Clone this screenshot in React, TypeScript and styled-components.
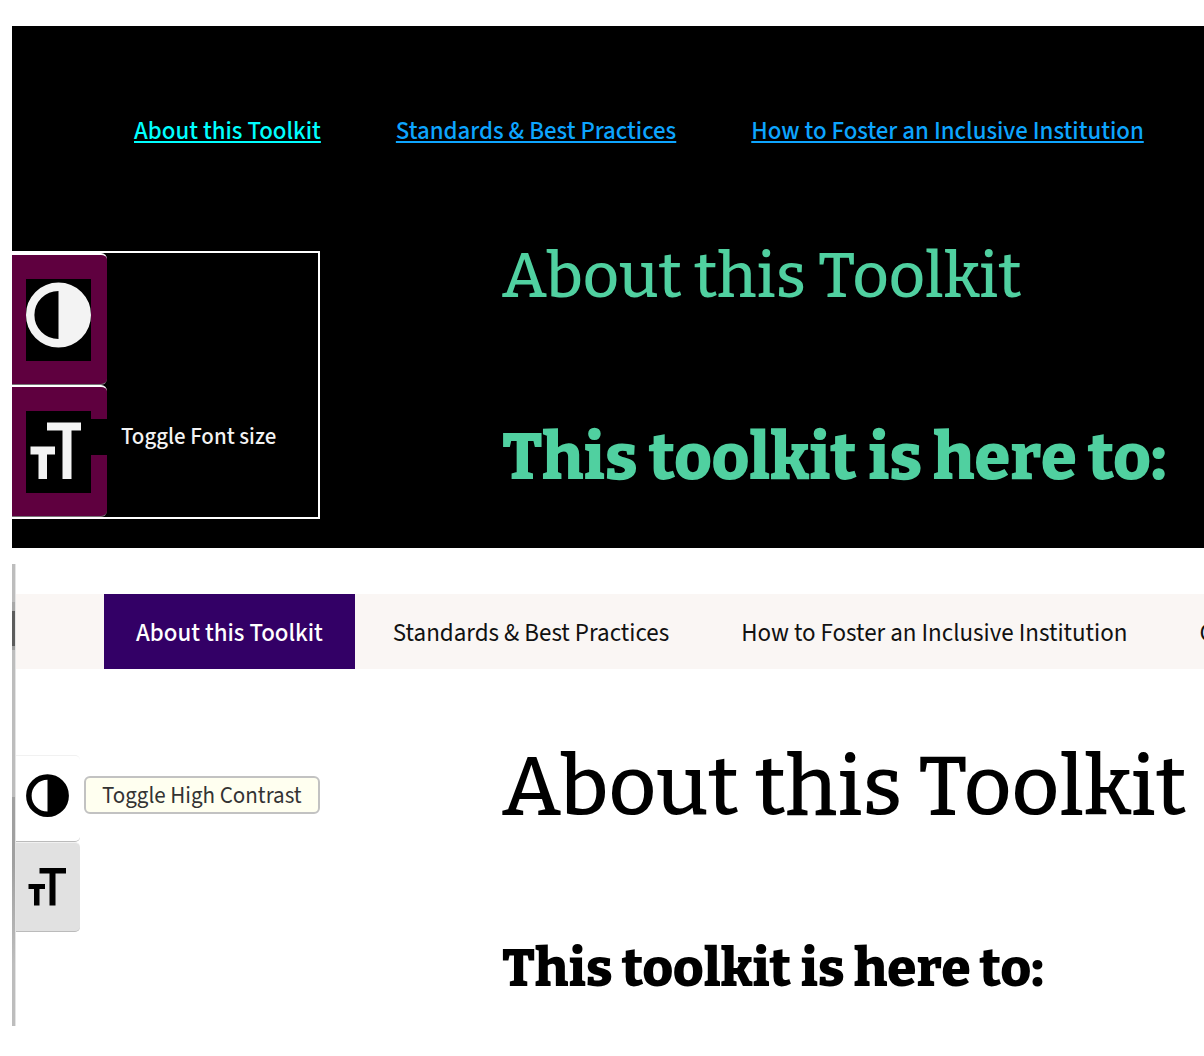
import React from "react";
import styled, { createGlobalStyle, css } from "styled-components";

const sans = `"Source Sans 3", "Source Sans Pro", "Noto Sans CJK SC", "Noto Sans", sans-serif`;
const slab = `Bitter, "DejaVu Serif", serif`;

const GlobalStyle = createGlobalStyle`
  *, *::before, *::after { box-sizing: border-box; }
  body { margin: 0; background: #fff; font-family: ${sans}; overflow-x: hidden; }
  h1, h2 { margin: 0; padding: 0; }
`;

const Page = styled.main`
  display: flex;
  flex-direction: column;
  gap: 16px;
  padding: 26px 0 30px 12px;
`;

const DarkPanel = styled.section`
  background: #000;
  padding: 85px 0 29px;
  overflow: hidden;
`;

const LightPanel = styled.section`
  display: grid;
  grid-template-columns: 4px minmax(0, 1fr);
  background: #fff;
  overflow: hidden;
`;

const WindowEdge = styled.div`
  border-right: 1px solid #e4e4e4;
  background: linear-gradient(
    to bottom,
    #bdbdbd 0 38px,
    #a8a8a8 38px 47px,
    #5c5c5c 47px 82px,
    #9c9c9c 82px 86px,
    #bdbdbd 86px 233px,
    #a0a0a0 233px 300px,
    #bdbdbd 400px
  );
`;

const LightContent = styled.div`
  padding: 30px 0 18px;
  min-width: 0;
`;

const DarkNav = styled.nav`
  display: flex;
  gap: 75px;
  padding-left: 122px;
  white-space: nowrap;
`;

const DarkLink = styled.a<{ $current?: boolean }>`
  color: ${(p) => (p.$current ? "#00ffff" : "#0da5ff")};
  font-size: 25px;
  font-weight: 500;
  line-height: 40px;
  text-decoration: underline;
  text-decoration-thickness: 2px;
  text-underline-offset: 2px;
`;

const LightNav = styled.nav`
  display: flex;
  padding-left: 88px;
  background: #faf6f4;
  white-space: nowrap;
`;

const LightLink = styled.a<{ $current?: boolean }>`
  padding: 3px 36px 0;
  color: #111;
  font-size: 25px;
  line-height: 72px;
  text-decoration: none;
  ${(p) =>
    p.$current &&
    css`
      margin-right: 2px;
      padding: 3px 32px 0;
      background: #330066;
      color: #fff;
      font-weight: 500;
    `}
`;

const DarkBody = styled.div`
  display: grid;
  grid-template-columns: 490px minmax(0, 1fr);
  align-items: start;
  padding-top: 100px;
`;

const LightBody = styled.div`
  display: grid;
  grid-template-columns: 486px minmax(0, 1fr);
  align-items: start;
  padding-top: 70px;
`;

const Article = styled.div<{ $color: string; $gap: number }>`
  display: flex;
  flex-direction: column;
  gap: ${(p) => p.$gap}px;
  color: ${(p) => p.$color};
  font-family: ${slab};
  white-space: nowrap;
`;

const Title = styled.h1<{ $size: number; $line: number }>`
  font-size: ${(p) => p.$size}px;
  font-weight: 500;
  line-height: ${(p) => p.$line}px;
`;

const Subtitle = styled.h2<{ $size: number }>`
  font-size: ${(p) => p.$size}px;
  font-weight: 800;
  line-height: 80px;
`;

const DarkToolbar = styled.div`
  width: 308px;
  border: 2px solid #fff;
  border-left: 0;
`;

const DarkTool = styled.button`
  display: flex;
  position: relative;
  width: 95px;
  height: 132px;
  padding: 0 0 0 14px;
  align-items: center;
  border: 0;
  border-top: 2px solid #fff;
  border-bottom: 1px solid #777;
  border-radius: 0 6px 6px 0;
  background: #5f003f;
  color: #f3f3f3;
`;

const DarkIconBox = styled.span`
  display: block;
  position: relative;
  z-index: 1;
  width: 65px;
  height: 82px;
  background: #000;

  svg { display: block; width: 65px; height: 82px; }
`;

const DarkTip = styled.span`
  position: absolute;
  left: 79px;
  top: 32px;
  padding: 0 30px;
  background: #000;
  color: #f3f3f3;
  font-family: ${sans};
  font-size: 23px;
  font-weight: 500;
  line-height: 36px;
  white-space: nowrap;
`;

const LightToolbar = styled.div`
  width: 64px;
  padding-top: 16px;
`;

const LightTool = styled.button<{ $shaded?: boolean }>`
  display: flex;
  position: relative;
  width: 64px;
  height: ${(p) => (p.$shaded ? 90 : 87)}px;
  padding: 0 0 0 10px;
  align-items: center;
  border: 0;
  border-top: 1px solid #f1f1f1;
  border-bottom: 1px solid #bbb;
  border-radius: 0 5px 5px 0;
  background: ${(p) => (p.$shaded ? "#e1e1e1" : "#fff")};
  color: #000;

  svg { display: block; width: 43px; height: 54px; }
`;

const LightTip = styled.span`
  position: absolute;
  left: 68px;
  top: 20px;
  padding: 1px 16px 0;
  border: 2px solid #c2c2c2;
  border-radius: 6px;
  background: #fffff0;
  color: #333;
  font-family: ${sans};
  font-size: 23px;
  line-height: 33px;
  white-space: nowrap;
`;

const Contrast = () => (
  <svg viewBox="0 0 65 82" aria-hidden="true">
    <circle cx="32.5" cy="36" r="28.3" fill="none" stroke="currentColor" strokeWidth="8.4" />
    <path d="M32.5 8a28 28 0 0 1 0 56z" fill="currentColor" />
  </svg>
);

const TextSize = () => (
  <svg viewBox="0 0 65 82" aria-hidden="true">
    <path
      d="M21 11.5h34v8h-9.500v48.500h-9v-48.500h-15.500zM4.500 35.500h24.500v8h-8v24.500h-8.500v-24.500h-8z"
      fill="currentColor"
    />
  </svg>
);

const TextSizeSmall = () => (
  <svg viewBox="0 0 43 54" aria-hidden="true">
    <path
      d="M13.500 8h26.500v5.500h-10.500v32h-6v-32h-10zM2.500 24h16.500v5h-5.500v16.500h-5.500v-16.500h-5.500z"
      fill="currentColor"
    />
  </svg>
);

export default function App() {
  return (
    <>
      <GlobalStyle />
      <Page>
        <DarkPanel>
          <DarkNav aria-label="High contrast">
            <DarkLink href="#about" $current>About this Toolkit</DarkLink>
            <DarkLink href="#standards">Standards &amp; Best Practices</DarkLink>
            <DarkLink href="#foster">How to Foster an Inclusive Institution</DarkLink>
          </DarkNav>
          <DarkBody>
            <DarkToolbar>
              <DarkTool type="button" aria-label="Toggle High Contrast">
                <DarkIconBox><Contrast /></DarkIconBox>
              </DarkTool>
              <DarkTool type="button">
                <DarkIconBox><TextSize /></DarkIconBox>
                <DarkTip>Toggle Font size</DarkTip>
              </DarkTool>
            </DarkToolbar>
            <Article $color="#50d0a0" $gap={116}>
              <Title $size={63} $line={50}>About this Toolkit</Title>
              <Subtitle $size={65}>This toolkit is here to:</Subtitle>
            </Article>
          </DarkBody>
        </DarkPanel>
        <LightPanel>
          <WindowEdge />
          <LightContent>
            <LightNav aria-label="Standard contrast">
              <LightLink href="#about" $current>About this Toolkit</LightLink>
              <LightLink href="#standards">Standards &amp; Best Practices</LightLink>
              <LightLink href="#foster">How to Foster an Inclusive Institution</LightLink>
              <LightLink href="#create">C</LightLink>
            </LightNav>
            <LightBody>
              <LightToolbar>
                <LightTool type="button">
                  <Contrast />
                  <LightTip>Toggle High Contrast</LightTip>
                </LightTool>
                <LightTool type="button" $shaded aria-label="Toggle Font size">
                  <TextSizeSmall />
                </LightTool>
              </LightToolbar>
              <Article $color="#000" $gap={93}>
                <Title $size={83} $line={96}>About this Toolkit</Title>
                <Subtitle $size={53}>This toolkit is here to:</Subtitle>
              </Article>
            </LightBody>
          </LightContent>
        </LightPanel>
      </Page>
    </>
  );
}
